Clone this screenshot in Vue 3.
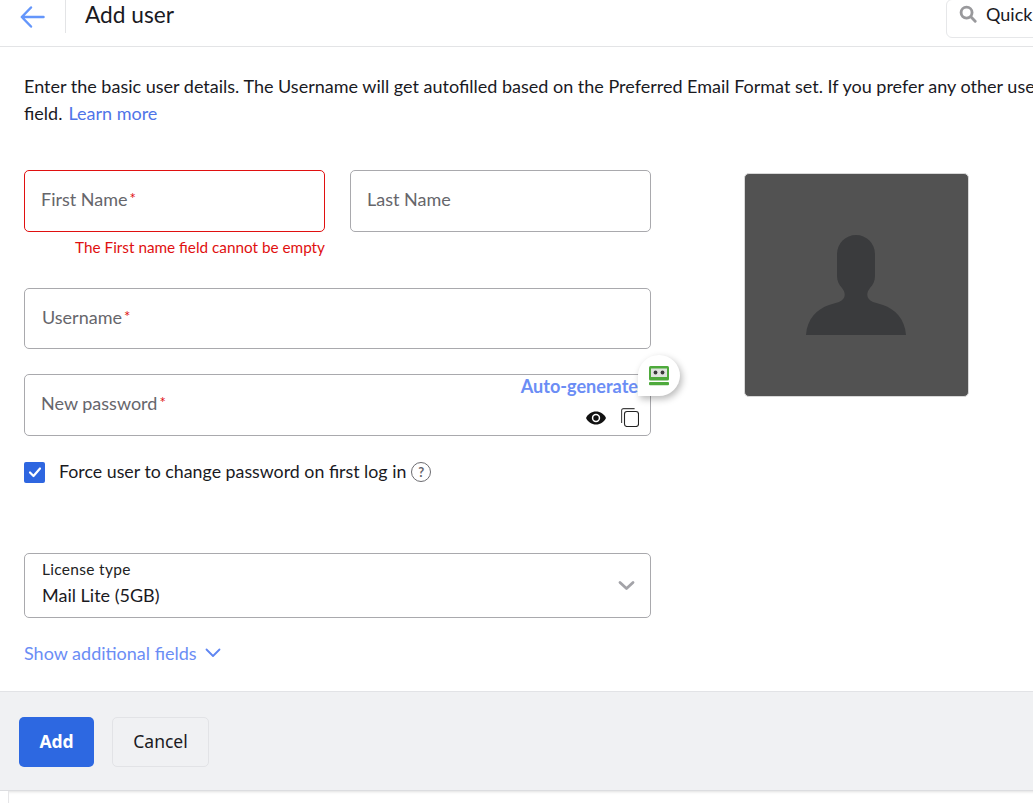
<script setup>
const helpTitle = 'Force user to change password on first log in'
</script>

<template>
  <div class="page">
    <header class="top">
      <div class="back">
        <svg width="26" height="24" viewBox="0 0 26 24" fill="none" stroke="#6496fb" stroke-width="2.500" stroke-linecap="round" stroke-linejoin="round">
          <path d="M23.500 12H2M11 2.500L1.800 12l9.200 9.500" />
        </svg>
      </div>
      <h1 class="title">Add user</h1>
      <div class="search">
        <svg width="18" height="18" viewBox="0 0 19 19" fill="none" stroke="#99999c" stroke-width="3" stroke-linecap="round">
          <circle cx="8" cy="8" r="5.800" />
          <path d="M12.500 12.500l4.600 4.600" />
        </svg>
        <span>Quick</span>
      </div>
    </header>

    <p class="intro">
      <span class="line">Enter the basic user details. The Username will get autofilled based on the Preferred Email Format set. If you prefer any other username, edit this</span>
      <span class="line">field.<a class="link">Learn more</a></span>
    </p>

    <main class="content">
      <section class="form">
        <div class="name-row">
          <div class="name-col">
            <div class="field field-error"><span class="ph">First Name<i class="req">*</i></span></div>
            <div class="error">The First name field cannot be empty</div>
          </div>
          <div class="name-col">
            <div class="field"><span class="ph">Last Name</span></div>
          </div>
        </div>

        <div class="field field-user"><span class="ph ph-user">Username<i class="req">*</i></span></div>

        <div class="field field-pass">
          <span class="ph">New password<i class="req">*</i></span>
          <a class="autogen">Auto-generate</a>
          <div class="pass-icons">
            <svg width="20" height="14" viewBox="0 0 20 14">
              <path fill="#111" d="M10 0.500C5.600 0.500 2 3 0 7c2 4 5.600 6.500 10 6.500s8-2.500 10-6.500c-2-4-5.600-6.500-10-6.500z" />
              <circle cx="10" cy="7" r="4.200" fill="#fff" />
              <circle cx="10" cy="7" r="2.700" fill="#111" />
            </svg>
            <svg width="18" height="19" viewBox="0 0 18 19" fill="none" stroke="#222" stroke-width="1.100">
              <path d="M0.600 15V2.600a2 2 0 0 1 2-2h11" stroke="#444" />
              <rect x="3.500" y="3.500" width="14" height="15" rx="2.500" fill="#fff" />
            </svg>
          </div>
          <div class="rf">
            <svg width="22" height="22" viewBox="0 0 22 22">
              <rect x="1" y="1" width="20" height="14.500" rx="1.500" fill="#4eaa3c" />
              <rect x="3" y="3.500" width="16" height="8.500" fill="#dfe3df" />
              <circle cx="7.500" cy="7.500" r="1.900" fill="#3a3a3a" />
              <circle cx="14.500" cy="7.500" r="1.900" fill="#3a3a3a" />
              <rect x="1" y="17" width="20" height="3.200" rx="1" fill="#4eaa3c" />
            </svg>
          </div>
        </div>

        <div class="check-row" :title="helpTitle">
          <span class="check">
            <svg width="14" height="12" viewBox="0 0 14 12" fill="none" stroke="#fff" stroke-width="2.200" stroke-linecap="round" stroke-linejoin="round">
              <path d="M2 6.500l3.500 3.500L12 2.500" />
            </svg>
          </span>
          <span class="check-label">Force user to change password on first log in</span>
          <span class="help">?</span>
        </div>

        <div class="select">
          <div class="select-text">
            <span class="select-label">License type</span>
            <span class="select-value">Mail Lite (5GB)</span>
          </div>
          <svg width="17" height="11" viewBox="0 0 17 11" fill="none" stroke="#a3a3a8" stroke-width="2.800" stroke-linecap="round" stroke-linejoin="round">
            <path d="M2 2.500l6.500 6 6.500-6" />
          </svg>
        </div>

        <a class="more">
          Show additional fields
          <svg width="16" height="10" viewBox="0 0 16 10" fill="none" stroke="#5f86f2" stroke-width="1.800" stroke-linecap="round" stroke-linejoin="round">
            <path d="M1.500 1.500L8 8l6.500-6.500" />
          </svg>
        </a>
      </section>

      <aside class="avatar">
        <svg width="223" height="222" viewBox="1 1 223 222">
          <path fill="#3a3b3d" d="M93 81a19 19 0 0 1 38 0v22c0 5-2 9-5 12-4 5-4 11 3 14l10 3c12 4 22 14 23 30H62c1-16 11-26 23-30l10-3c7-3 7-9 3-14-3-3-5-7-5-12z" />
        </svg>
      </aside>
    </main>

    <footer class="actions">
      <button class="btn btn-add">Add</button>
      <button class="btn btn-cancel">Cancel</button>
    </footer>
    <div class="under"></div>
  </div>
</template>

<style>
html, body { margin: 0; background: #fff; overflow: hidden; }
</style>

<style scoped>
.page {
  width: 1033px;
  height: 803px;
  overflow: hidden;
  font-family: Lato, "Liberation Sans", sans-serif;
  color: #1a1a1f;
  background: #fff;
}
.top {
  height: 46px;
  border-bottom: 1px solid #e3e4e6;
  display: flex;
  align-items: flex-start;
  position: relative;
}
.back {
  width: 65px;
  height: 33px;
  border-right: 1px solid #e3e4e6;
  display: flex;
  align-items: center;
}
.back svg { margin-left: 20px; }
.title {
  margin: -1px 0 0 19px;
  font-size: 22.700px;
  font-weight: 400;
  line-height: 32px;
}
.search {
  position: absolute;
  left: 946px;
  top: -1px;
  width: 120px;
  height: 39px;
  box-sizing: border-box;
  border: 1px solid #e6e7e9;
  border-radius: 6px;
  display: flex;
  align-items: center;
  gap: 9px;
  padding: 0 0 9px 12px;
  font-size: 18px;
}
.intro {
  margin: 26px 0 0;
  padding-left: 24px;
  font-size: 18px;
  line-height: 27px;
}
.line { display: block; white-space: nowrap; }
.link { color: #4f74e8; margin-left: 6px; }
.content { display: flex; margin-top: 43px; padding-left: 24px; }
.form { width: 627px; display: flex; flex-direction: column; }
.name-row { display: flex; gap: 25px; height: 87px; }
.name-col { width: 301px; }
.field {
  position: relative;
  height: 62px;
  box-sizing: border-box;
  border: 1px solid #a9a9ad;
  border-radius: 5px;
  display: flex;
  align-items: center;
  padding: 0 0 5px 16px;
  font-size: 18px;
  color: #66666b;
}
.field-error { border-color: #e01010; }
.error {
  margin-top: 6px;
  text-align: right;
  font-size: 15.300px;
  line-height: 18px;
  color: #e01010;
}
.req {
  font-style: normal;
  color: #e01010;
  font-size: 15px;
  margin-left: 2px;
  vertical-align: 2px;
}
.field-user { margin-top: 31px; height: 61px; padding-bottom: 4px; }
.ph-user { margin-left: 1px; }
.field-pass { margin-top: 25px; }
.autogen {
  position: absolute;
  right: 12px;
  top: 0;
  font-size: 18.100px;
  font-weight: 700;
  line-height: 22px;
  color: #6b8df5;
}
.pass-icons {
  position: absolute;
  right: 11px;
  top: 33px;
  display: flex;
  align-items: center;
  gap: 15px;
}
.rf {
  position: absolute;
  left: 613px;
  top: -20px;
  width: 42px;
  height: 41px;
  background: #fff;
  border-radius: 50% 50% 50% 0;
  box-shadow: 2px 3px 7px rgba(0, 0, 0, 0.28);
  display: flex;
  align-items: center;
  justify-content: center;
}
.check-row {
  margin-top: 25px;
  height: 22px;
  display: flex;
  align-items: center;
  font-size: 17.800px;
  color: #1a1a1f;
}
.check {
  width: 21px;
  height: 21px;
  border-radius: 2px;
  background: #2e66e0;
  display: flex;
  align-items: center;
  justify-content: center;
}
.check-label { margin-left: 14px; position: relative; top: -1px; }
.help {
  margin-left: 5px;
  width: 18px;
  height: 18px;
  border: 1px solid #6b6b70;
  border-radius: 50%;
  display: flex;
  align-items: center;
  justify-content: center;
  font-size: 13px;
  font-weight: 700;
  color: #66666b;
}
.select {
  margin-top: 70px;
  height: 65px;
  box-sizing: border-box;
  border: 1px solid #a9a9ad;
  border-radius: 5px;
  display: flex;
  align-items: center;
  justify-content: space-between;
  padding: 0 15px 0 17px;
}
.select-text { display: flex; flex-direction: column; margin-top: -4px; }
.select-label { font-size: 15.500px; line-height: 20px; color: #222; letter-spacing: 0.3px; }
.select-value { font-size: 18px; line-height: 26px; margin-top: 3px; color: #1a1a1f; }
.more {
  margin-top: 24px;
  display: flex;
  align-items: center;
  gap: 8px;
  font-size: 18px;
  line-height: 22px;
  color: #6b8df5;
}
.avatar {
  margin: 3px 0 0 93px;
  width: 225px;
  height: 224px;
  box-sizing: border-box;
  border: 1px solid #d8d8d8;
  background: #525252;
  border-radius: 5px;
}
.avatar svg { display: block; }
.actions {
  position: absolute;
  left: 0;
  top: 691px;
  width: 1033px;
  height: 100px;
  box-sizing: border-box;
  background: #f0f1f3;
  border-top: 1px solid #e2e3e6;
  border-bottom: 1px solid #dcdde0;
  display: flex;
  align-items: center;
  gap: 18px;
  padding: 1px 0 0 19px;
}
.btn {
  height: 50px;
  border-radius: 5px;
  padding: 0 0 2px;
  font-family: "Noto Sans", Inter, sans-serif;
  font-size: 17.500px;
  cursor: pointer;
}
.btn-add {
  width: 75px;
  border: 0;
  background: #2d68e1;
  color: #fff;
  font-weight: 700;
}
.btn-cancel {
  width: 97px;
  border: 1px solid #e2e3e6;
  background: #f0f1f3;
  color: #1a1a1f;
}
.under {
  position: absolute;
  left: 8px;
  top: 791px;
  width: 1025px;
  height: 12px;
  border-left: 1px solid #e6e6e8;
  box-shadow: inset 0 3px 3px -2px rgba(0, 0, 0, 0.12);
}
</style>
